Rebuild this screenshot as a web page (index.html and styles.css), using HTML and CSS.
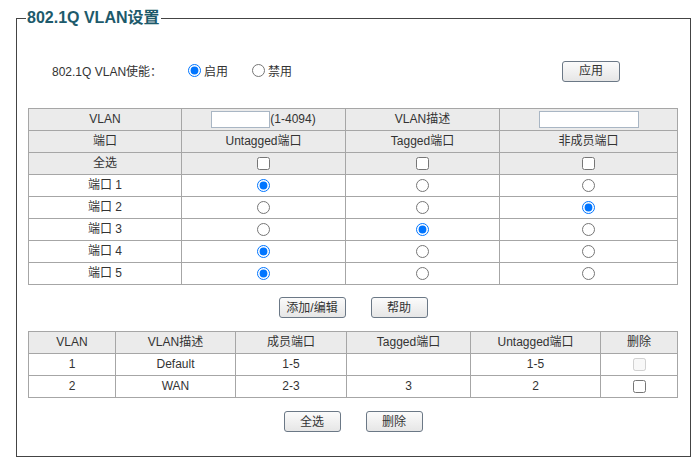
FILE: index.html
```html
<!DOCTYPE html>
<html>
<head>
<meta charset="utf-8">
<link rel="stylesheet" href="styles.css">
</head>
<body>
<fieldset class="panel">
  <legend class="title">802.1Q VLAN设置</legend>
  <div class="enable-row">
    <span class="enable-label">802.1Q VLAN使能：</span>
    <label class="opt"><input type="radio" name="en" checked><span>启用</span></label>
    <label class="opt"><input type="radio" name="en"><span>禁用</span></label>
    <button class="btn btn-apply">应用</button>
  </div>

  <table class="grid edit">
    <colgroup><col class="c1"><col class="c2"><col class="c3"><col class="c4"></colgroup>
    <tr class="head"><td>VLAN</td><td><div class="field"><input class="txt txt-id" type="text"><span>(1-4094)</span></div></td><td>VLAN描述</td><td><div class="field"><input class="txt txt-desc" type="text"></div></td></tr>
    <tr class="head"><td>端口</td><td>Untagged端口</td><td>Tagged端口</td><td>非成员端口</td></tr>
    <tr class="head"><td>全选</td><td><input class="cb" type="checkbox"></td><td><input class="cb" type="checkbox"></td><td><input class="cb" type="checkbox"></td></tr>
    <tr><td>端口 1</td><td><input class="rb" type="radio" name="p1" checked></td><td><input class="rb" type="radio" name="p1"></td><td><input class="rb" type="radio" name="p1"></td></tr>
    <tr><td>端口 2</td><td><input class="rb" type="radio" name="p2"></td><td><input class="rb" type="radio" name="p2"></td><td><input class="rb" type="radio" name="p2" checked></td></tr>
    <tr><td>端口 3</td><td><input class="rb" type="radio" name="p3"></td><td><input class="rb" type="radio" name="p3" checked></td><td><input class="rb" type="radio" name="p3"></td></tr>
    <tr><td>端口 4</td><td><input class="rb" type="radio" name="p4" checked></td><td><input class="rb" type="radio" name="p4"></td><td><input class="rb" type="radio" name="p4"></td></tr>
    <tr><td>端口 5</td><td><input class="rb" type="radio" name="p5" checked></td><td><input class="rb" type="radio" name="p5"></td><td><input class="rb" type="radio" name="p5"></td></tr>
  </table>

  <div class="btn-row btn-row-1">
    <button class="btn btn-add">添加/编辑</button>
    <button class="btn btn-std">帮助</button>
  </div>

  <table class="grid list">
    <colgroup><col class="d1"><col class="d2"><col class="d3"><col class="d4"><col class="d5"><col class="d6"></colgroup>
    <tr class="head"><td>VLAN</td><td>VLAN描述</td><td>成员端口</td><td>Tagged端口</td><td>Untagged端口</td><td>删除</td></tr>
    <tr><td>1</td><td>Default</td><td>1-5</td><td></td><td>1-5</td><td><input class="cb" type="checkbox" disabled></td></tr>
    <tr><td>2</td><td>WAN</td><td>2-3</td><td>3</td><td>2</td><td><input class="cb" type="checkbox"></td></tr>
  </table>

  <div class="btn-row btn-row-2">
    <button class="btn btn-std">全选</button>
    <button class="btn btn-std">删除</button>
  </div>
</fieldset>
</body>
</html>
```

FILE: styles.css
```css
html, body {
  margin: 0;
  padding: 0;
  background: #ffffff;
}
body {
  font-family: "Liberation Sans", Arial, "Noto Sans CJK SC", sans-serif;
  font-size: 12px;
  color: #333333;
}
.panel {
  box-sizing: border-box;
  margin: 8px 0 0 16px;
  width: 675px;
  height: 449px;
  border: 1px solid #444444;
  padding: 0 12px 0 11px;
}
.title {
  font-size: 16px;
  line-height: 20px;
  font-weight: bold;
  color: #1d5a6b;
  padding: 0 1px;
  margin-left: -2px;
}
.enable-row {
  display: flex;
  align-items: center;
  height: 24px;
  margin-top: 30px;
  padding-left: 24px;
  padding-right: 58px;
}
.enable-label {
  width: 136px;
  flex: none;
}
.opt {
  display: flex;
  align-items: center;
  margin-right: 24px;
}
.opt input {
  margin: 0 3px 0 0;
  width: 13px;
  height: 13px;
}
.btn {
  box-sizing: border-box;
  height: 21px;
  padding: 0;
  font-family: "Liberation Sans", Arial, "Noto Sans CJK SC", sans-serif;
  font-size: 12px;
  line-height: 14px;
  color: #333333;
  border: 1px solid #6b7886;
  border-radius: 3px;
  background: linear-gradient(#fbfbfb, #e6e6e6);
}
.btn-apply {
  margin-left: auto;
  margin-top: 2px;
  width: 58px;
}
.btn-add { width: 67px; }
.btn-std { width: 57px; }

.grid {
  width: 649px;
  border-collapse: collapse;
  table-layout: fixed;
}
.grid td {
  height: 21px;
  padding: 0;
  line-height: 15px;
  border: 1px solid #a6a6a6;
  text-align: center;
  vertical-align: middle;
  white-space: nowrap;
}
.grid .head td {
  background: #ebebeb;
}
.edit {
  margin-top: 26px;
}
.c1 { width: 153px; }
.c2 { width: 164px; }
.c3 { width: 154px; }
.c4 { width: 178px; }
.d1 { width: 87px; }
.d2 { width: 120px; }
.d3 { width: 111px; }
.d4 { width: 124px; }
.d5 { width: 130px; }
.d6 { width: 77px; }

.field {
  display: flex;
  justify-content: center;
  align-items: center;
  height: 17px;
}
.txt {
  box-sizing: border-box;
  height: 17px;
  margin: 0;
  padding: 0 2px;
  border: 1px solid #a9b6c4;
  background: #ffffff;
}
.txt-id { width: 59px; }
.txt-desc { width: 100px; }
.rb, .cb {
  display: block;
  margin: 0 auto;
  width: 13px;
  height: 13px;
}
.btn-row {
  display: flex;
  justify-content: center;
  gap: 25px;
}
.btn-row-1 { margin-top: 12px; }
.list { margin-top: 13px; }
.btn-row-2 { margin-top: 13px; }
```
